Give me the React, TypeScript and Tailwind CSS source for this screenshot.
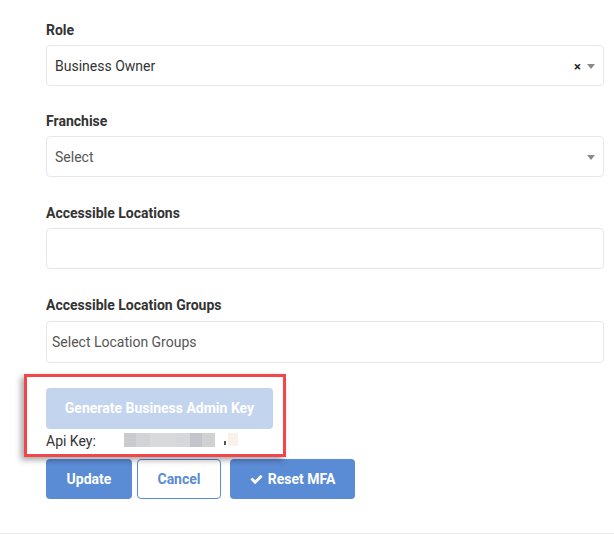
import type { ReactNode } from 'react'

const FONT = { fontFamily: 'Roboto, "Liberation Sans", Arial, sans-serif' }

function Caret() {
  return (
    <svg width="8" height="5" viewBox="0 0 8 5" aria-hidden="true">
      <path d="M0 0h8L4 5z" fill="#8a8a8a" />
    </svg>
  )
}

function Field({ label, gap = 'mb-[25px]', children }: { label: string; gap?: string; children: ReactNode }) {
  return (
    <div className={gap}>
      <div className="mb-[5px] h-5 text-[14px] leading-5 font-bold text-[#333]">{label}</div>
      {children}
    </div>
  )
}

function SelectBox({ value, placeholder, clearable }: { value?: string; placeholder?: string; clearable?: boolean }) {
  return (
    <div className="flex h-[41px] items-center rounded border border-[#e3e8f0] bg-white pt-[2px] pr-[8px] pl-[8px]">
      <span className={`flex-1 text-[14px] ${value ? 'text-[#333]' : 'text-[#555]'}`}>{value ?? placeholder}</span>
      {clearable && <span className="mr-[6px] text-[13px] leading-none font-bold text-[#222]">×</span>}
      <Caret />
    </div>
  )
}

export default function App() {
  return (
    <div className="relative h-[535px] w-[614px] overflow-hidden bg-white" style={FONT}>
      <div className="pt-[20px] pr-[10px] pl-[46px]">
        <Field label="Role">
          <SelectBox value="Business Owner" clearable />
        </Field>
        <Field label="Franchise" gap="mb-[26px]">
          <SelectBox placeholder="Select" />
        </Field>
        <Field label="Accessible Locations" gap="mb-[26px]">
          <div className="h-[41px] rounded border border-[#e3e8f0] bg-white" />
        </Field>
        <div className="mb-[25px]">
          <div className="mb-[6px] h-5 text-[14px] leading-5 font-bold text-[#333]">Accessible Location Groups</div>
          <div className="flex h-[42px] items-center rounded border border-[#e3e8f0] bg-white pt-[1px] pl-[5px] text-[14px] text-[#555]">
            Select Location Groups
          </div>
        </div>

        <button
          type="button"
          className="h-[41px] w-[227px] rounded-[4px] bg-[#c3d4ee] text-[14px] font-bold text-white"
        >
          Generate Business Admin Key
        </button>
        <div className="flex h-[30px] items-start pt-[2px] text-[14px] text-[#333]">
          <span className="w-[78px]">Api Key:</span>
          <span className="mt-[2px] flex h-[14px] blur-[0.6px]">
            <span className="w-[12px] bg-[#c9cbcf]" />
            <span className="w-[14px] bg-[#d2d3d6]" />
            <span className="w-[26px] bg-[#d9dadc]" />
            <span className="w-[14px] bg-[#d6d7da]" />
            <span className="w-[12px] bg-[#c3c5ca]" />
            <span className="w-[13px] bg-[#d0d1d4]" />
          </span>
          <span className="mt-[10px] ml-[9px] h-[4px] w-[2px] bg-[#555]" />
          <span className="mt-[2px] ml-[2px] h-[13px] w-[10px] bg-[#f8f2e8]" />
        </div>

        <div className="flex">
          <button type="button" className="h-[40px] w-[86px] rounded-[4px] bg-[#5a8bd5] text-[14px] font-bold text-white">
            Update
          </button>
          <button
            type="button"
            className="ml-[5px] h-[40px] w-[84px] rounded-[4px] border border-[#5a8bd5] bg-white text-[14px] font-bold text-[#5a8bd5]"
          >
            Cancel
          </button>
          <button
            type="button"
            className="ml-[9px] flex h-[40px] w-[125px] items-center justify-center gap-[5px] rounded-[4px] bg-[#5a8bd5] text-[14px] font-bold text-white"
          >
            <svg width="13" height="11" viewBox="0 0 13 11" aria-hidden="true">
              <path d="M0.5 5.6l2-2 2.6 2.6L10.6 0.7l2 2-7.5 7.5z" fill="white" />
            </svg>
            Reset MFA
          </button>
        </div>
      </div>

      <div className="absolute right-0 bottom-[1px] left-0 h-px bg-[#e6e9ee]" />

      {/* highlight frame around the key block */}
      <div className="pointer-events-none absolute top-[374px] left-[24px] h-[83px] w-[262px] border-[3px] border-[#f2474a] shadow-[-3px_3px_6px_rgba(0,0,0,0.35)]" />
    </div>
  )
}
